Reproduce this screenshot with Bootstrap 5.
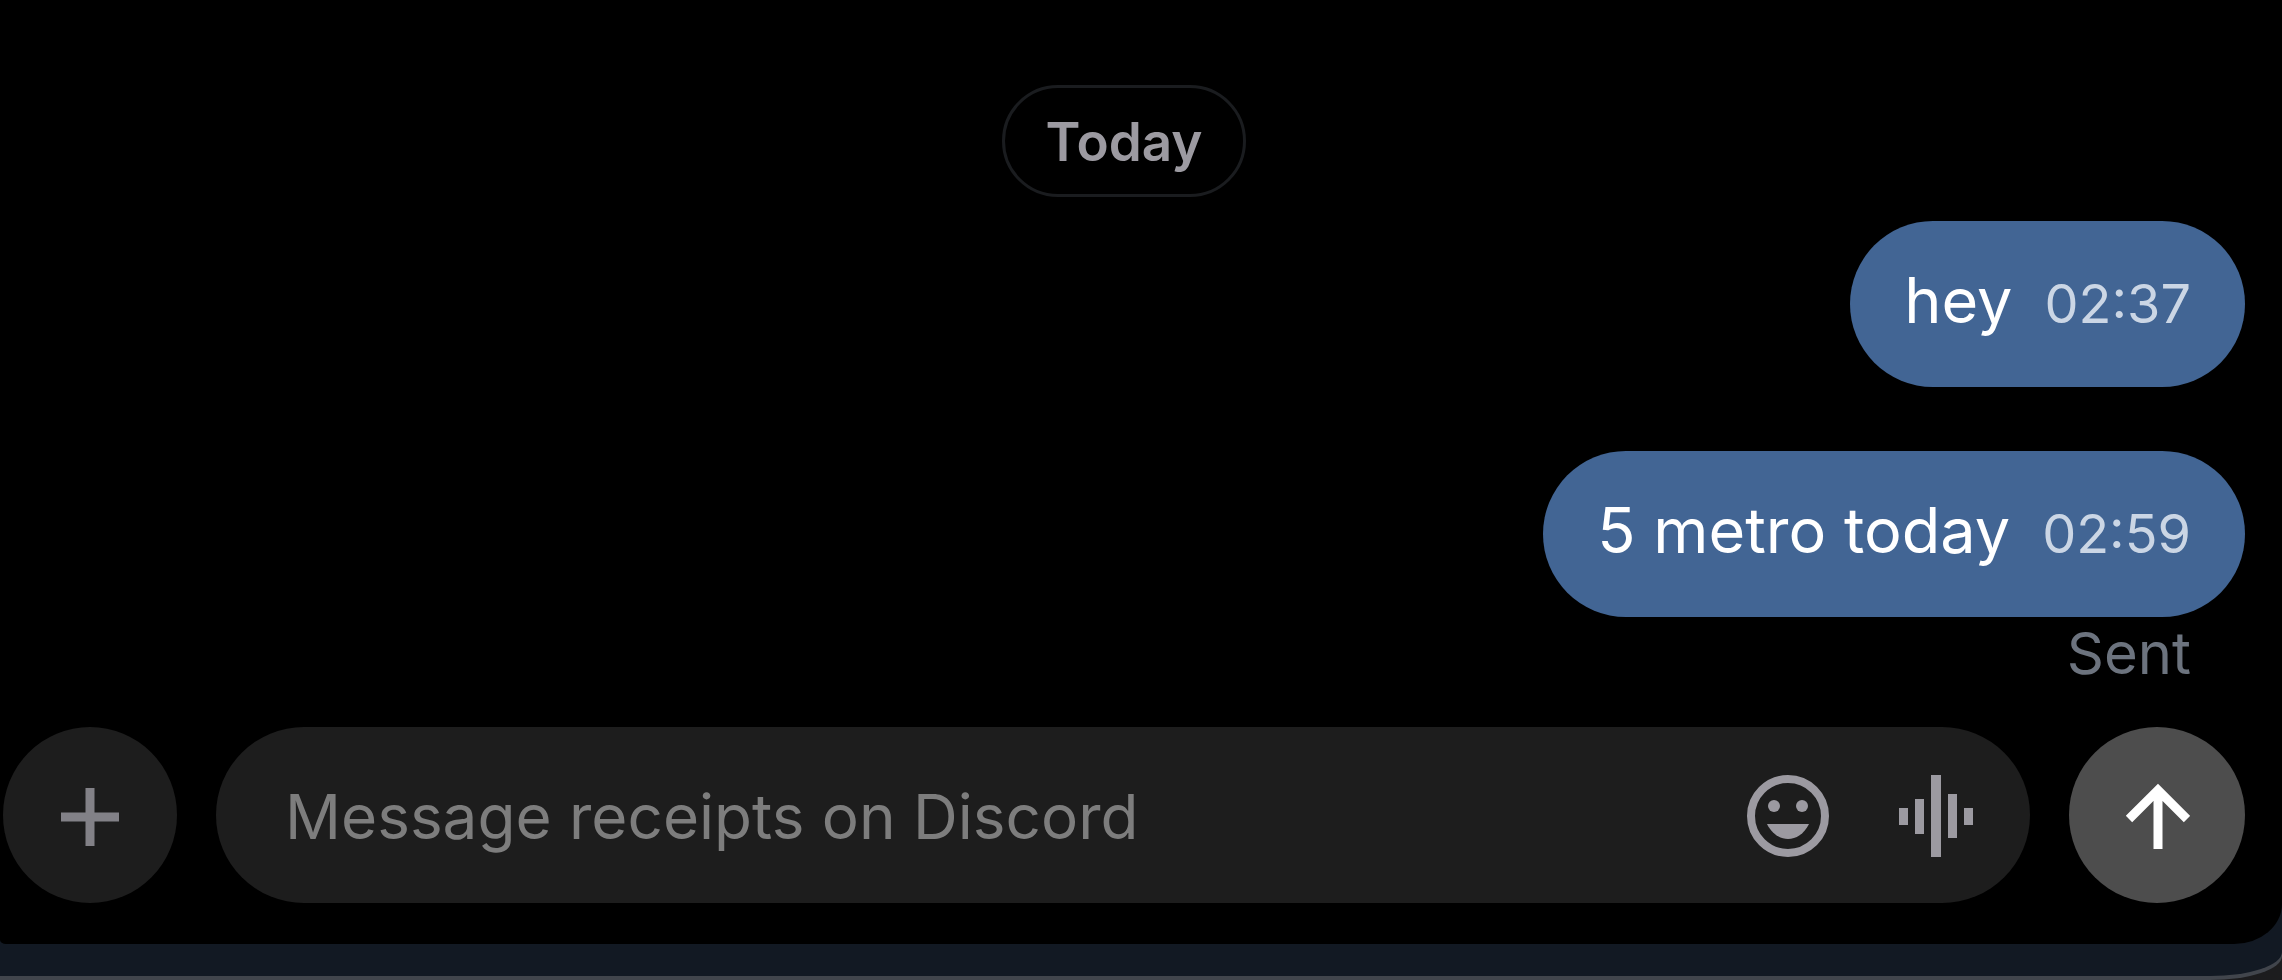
<!DOCTYPE html>
<html lang="en">
<head>
<meta charset="utf-8">
<meta name="viewport" content="width=device-width, initial-scale=1">
<title>Chat</title>
<link href="https://cdn.jsdelivr.net/npm/bootstrap@5.3.0/dist/css/bootstrap.min.css" rel="stylesheet">
<style>
  body { background: #1c1c1e; font-family: Inter, "Liberation Sans", sans-serif; }
  .window-edge { background: #41454c; padding-bottom: 4px; border-radius: 0 0 72px 0 / 0 0 24px 0; }
  .window-frame { background: #121923; padding-bottom: 32px; border-radius: 0 0 72px 0 / 0 0 24px 0; }
  .chat-panel { background: #000; padding: 85px 37px 41px 3px; border-radius: 0 0 48px 6px / 0 0 40px 4px; }
  .day-pill { color: #9c9aa1; border: 3px solid #1a1c1f; padding: 2px 41px 0; font-size: 53px; line-height: 104px; font-weight: 600; }
  .thread { gap: 64px; margin-top: 24px; }
  .bubble { background: #426594; color: #fff; padding: 0 54px; height: 166px; border-radius: 83px; gap: 32px; font-size: 63px; line-height: 158px; }
  .bubble time { color: #cbd6e5; font-size: 54px; }
  .status { color: #6c737e; font-size: 58px; line-height: 72px; padding-right: 54px; }
  .composer { gap: 39px; margin-top: 38px; }
  .round-btn { width: 176px; height: 176px; border: 0; }
  .add-btn { background: #1d1d1d; color: #828187; width: 174px; }
  .send-btn { background: #4d4d4d; color: #fff; }
  .composer .round-btn, .field-box { padding-top: 4px !important; }
  .field-box { background: #1d1d1d; height: 176px; border-radius: 88px; padding: 0 56px 0 69px; gap: 68px; min-width: 0; }
  .field-box input, .field-box input:focus { background: transparent; border: 0; box-shadow: none; color: #fff; font-size: 62px; line-height: 80px; padding: 0; min-width: 0; }
  .field-box input::placeholder { color: #7d7d7d; opacity: 1; }
  .tool-btn { background: none; border: 0; color: #9c9aa1; }
</style>
</head>
<body>
<div class="window-edge min-vh-100 d-flex flex-column">
  <div class="window-frame flex-grow-1 d-flex flex-column">
    <main class="chat-panel flex-grow-1 d-flex flex-column">
      <div class="day-pill rounded-pill align-self-center">Today</div>
      <div class="thread d-flex flex-column align-items-end">
        <div class="bubble d-flex align-items-baseline"><span>hey</span><time>02:37</time></div>
        <div class="bubble d-flex align-items-baseline"><span>5 metro today</span><time>02:59</time></div>
      </div>
      <div class="status text-end">Sent</div>
      <form class="composer d-flex align-items-center">
        <button type="button" class="round-btn add-btn rounded-circle p-0 flex-shrink-0 d-flex align-items-center justify-content-center" aria-label="Add attachment">
          <svg width="60" height="60" viewBox="0 0 60 60" fill="none" stroke="currentColor" stroke-width="9"><path d="M30 1v58M1 30h58"/></svg>
        </button>
        <div class="field-box d-flex align-items-center flex-grow-1">
          <input type="text" class="form-control flex-grow-1" placeholder="Message receipts on Discord" aria-label="Message receipts on Discord">
          <button type="button" class="tool-btn p-0 d-flex flex-shrink-0" aria-label="Emoji">
            <svg width="84" height="84" viewBox="0 0 84 84"><circle cx="42" cy="41" r="37" fill="none" stroke="currentColor" stroke-width="8"/><circle cx="28" cy="31" r="6" fill="currentColor"/><circle cx="56" cy="31" r="6" fill="currentColor"/><path d="M21 49h42C58 59 50 64 42 64S26 59 21 49z" fill="currentColor"/></svg>
          </button>
          <button type="button" class="tool-btn p-0 d-flex flex-shrink-0" aria-label="Voice message">
            <svg width="76" height="84" viewBox="0 0 76 84" fill="currentColor"><path d="M1 33h9v17H1zM17 24h9v35h-9zM33 0h10v82H33zM50 19h9v44h-9zM66 33h9v17h-9z"/></svg>
          </button>
        </div>
        <button type="submit" class="round-btn send-btn rounded-circle p-0 flex-shrink-0 d-flex align-items-center justify-content-center" aria-label="Send">
          <svg width="66" height="68" viewBox="0 0 66 68" fill="none" stroke="currentColor" stroke-width="9"><path d="M34 7v59M5 36 34 7l29 29"/></svg>
        </button>
      </form>
    </main>
  </div>
</div>
<script src="https://cdn.jsdelivr.net/npm/bootstrap@5.3.0/dist/js/bootstrap.bundle.min.js"></script>
</body>
</html>
